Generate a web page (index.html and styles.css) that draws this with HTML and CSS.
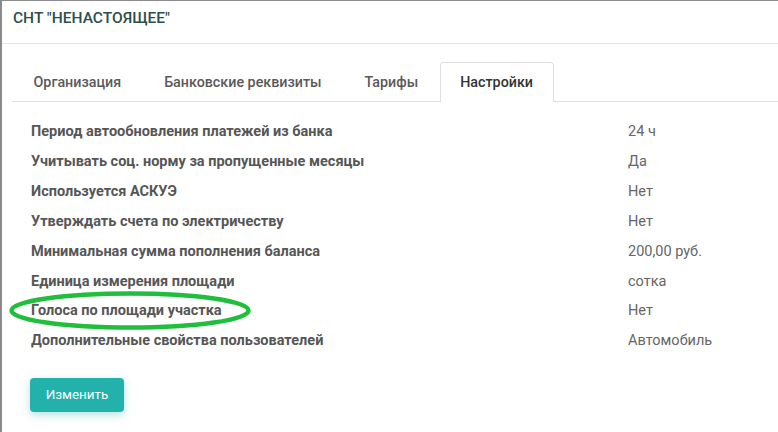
FILE: index.html
```html
<!DOCTYPE html>
<html lang="ru">
<head>
  <meta charset="UTF-8">
  <title>Настройки</title>
  <link rel="stylesheet" href="styles.css">
</head>
<body>
  <div class="panel">
    <div class="panel-title">СНТ "НЕНАСТОЯЩЕЕ"</div>
    <div class="panel-body">
      <ul class="tabs">
        <li class="tab">Организация</li>
        <li class="tab">Банковские реквизиты</li>
        <li class="tab">Тарифы</li>
        <li class="tab active">Настройки</li>
      </ul>

      <div class="settings">
        <div class="setting-name">Период автообновления платежей из банка</div>
        <div class="setting-value">24 ч</div>
        <div class="setting-name">Учитывать соц. норму за пропущенные месяцы</div>
        <div class="setting-value">Да</div>
        <div class="setting-name">Используется АСКУЭ</div>
        <div class="setting-value">Нет</div>
        <div class="setting-name">Утверждать счета по электричеству</div>
        <div class="setting-value">Нет</div>
        <div class="setting-name">Минимальная сумма пополнения баланса</div>
        <div class="setting-value">200,00 руб.</div>
        <div class="setting-name">Единица измерения площади</div>
        <div class="setting-value">сотка</div>
        <div class="setting-name marked">
          Голоса по площади участка
          <svg class="mark" width="244" height="41" viewBox="0 0 244 41">
            <ellipse cx="122" cy="20.5" rx="118.5" ry="17" fill="none" stroke="#1fbf3c" stroke-width="4.5"/>
          </svg>
        </div>
        <div class="setting-value">Нет</div>
        <div class="setting-name">Дополнительные свойства пользователей</div>
        <div class="setting-value">Автомобиль</div>
      </div>

      <button class="edit-btn">Изменить</button>
    </div>
  </div>
</body>
</html>
```

FILE: styles.css
```css
body {
  margin: 0;
  font-family: 'Roboto', 'Liberation Sans', sans-serif;
  background: #fff;
}
.panel {
  height: 432px;
  box-sizing: border-box;
  border-top: 1px solid #8a8a8a;
  border-left: 2px solid #8a8a8a;
  overflow: hidden;
}
.panel-title {
  height: 43px;
  box-sizing: border-box;
  padding: 8px 0 0 11px;
  font-size: 15.5px;
  font-weight: 500;
  color: #2c4f4c;
  border-bottom: 1px solid #e4e4e4;
}
.panel-body {
  padding: 18px 0 0 10px;
}
.tabs {
  display: flex;
  margin: 0;
  padding: 0;
  list-style: none;
  border-bottom: 1px solid #dedede;
}
.tab {
  height: 38px;
  line-height: 38px;
  padding: 0 20.5px;
  margin-bottom: -1px;
  font-size: 14.3px;
  font-weight: 500;
  color: #5a5a5a;
  border: 1px solid transparent;
  border-bottom: none;
}
.tab.active {
  padding: 0 19.5px;
  color: #333;
  background: #fff;
  border-color: #dedede;
  border-radius: 4px 4px 0 0;
  height: 39px;
}
.settings {
  display: grid;
  grid-template-columns: 597px 1fr;
  grid-auto-rows: 29.85px;
  align-items: center;
  margin: 15px 0 0 19px;
  font-size: 14.5px;
}
.setting-name {
  font-weight: 700;
  color: #565656;
}
.setting-value {
  color: #666;
}
.marked {
  position: relative;
}
.mark {
  position: absolute;
  left: -23px;
  top: -12px;
}
.edit-btn {
  margin: 22px 0 0 18px;
  width: 94px;
  height: 34px;
  border: none;
  border-radius: 4px;
  background: #22b1ab;
  color: #fff;
  font-family: inherit;
  font-size: 13.4px;
  box-shadow: 0 3px 8px rgba(34, 177, 171, 0.35);
}
```
